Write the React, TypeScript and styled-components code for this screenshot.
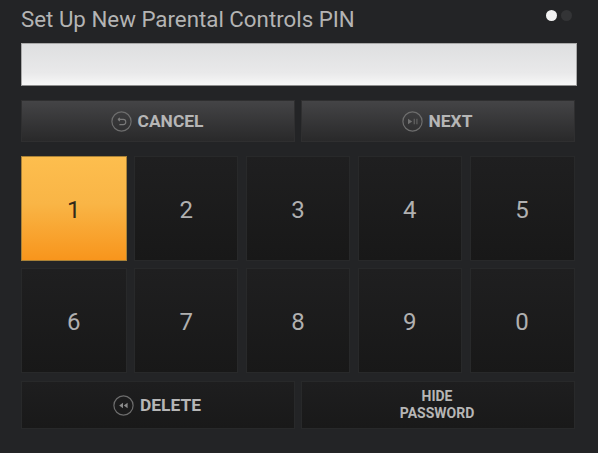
import React from 'react';
import styled, { createGlobalStyle } from 'styled-components';

const GlobalStyle = createGlobalStyle`
  html, body {
    margin: 0;
    padding: 0;
    background: #232426;
  }
`;

const KEYS = ['1', '2', '3', '4', '5', '6', '7', '8', '9', '0'];

const RingIcon: React.FC<{ children: React.ReactNode }> = ({ children }) => (
  <svg width="21" height="21" viewBox="0 0 21 21" fill="none">
    <circle cx="10.5" cy="10.5" r="9.6" stroke="#6d6d6d" strokeWidth="1.2" />
    {children}
  </svg>
);

const App: React.FC = () => (
  <Screen>
    <GlobalStyle />
    <Header>
      <Title>Set Up New Parental Controls PIN</Title>
      <Steps>
        <StepDot active />
        <StepDot />
      </Steps>
    </Header>
    <PinInput />
    <ActionRow>
      <ActionButton tone="raised">
        <RingIcon>
          <path
            d="M7 8.4h5.2a2.6 2.6 0 0 1 0 5.2H8.4M7 8.4l1.9-1.6M7 8.4l1.9 1.6"
            stroke="#7a7a7a"
            strokeWidth="1.1"
          />
        </RingIcon>
        CANCEL
      </ActionButton>
      <ActionButton tone="raised">
        <RingIcon>
          <path d="M6 7.7l4.2 2.8L6 13.3z" fill="#707070" />
          <path d="M11.6 7.8h1.4v5.4h-1.4zM14.2 7.8h1.4v5.4h-1.4z" fill="#5c5c5c" />
        </RingIcon>
        NEXT
      </ActionButton>
    </ActionRow>
    <KeyGrid>
      {KEYS.map((key, index) => (
        <Key key={key} selected={index === 0}>
          {key}
        </Key>
      ))}
    </KeyGrid>
    <ActionRow bottom>
      <ActionButton tone="flat">
        <RingIcon>
          <path d="M10 7.8v5.4l-3.8-2.7zM14.6 7.8v5.4l-3.8-2.7z" fill="#8a8a8a" />
        </RingIcon>
        DELETE
      </ActionButton>
      <ActionButton tone="flat" small>
        HIDE
        <br />
        PASSWORD
      </ActionButton>
    </ActionRow>
  </Screen>
);

const Screen = styled.div`
  box-sizing: border-box;
  width: 598px;
  height: 453px;
  padding: 0 23px 0 21px;
  overflow: hidden;
  background: #232426;
  font-family: Roboto, 'Liberation Sans', sans-serif;
`;

const Header = styled.div`
  display: flex;
  justify-content: space-between;
  align-items: center;
  height: 38px;
  padding: 0 3px 0 0;
`;

const Title = styled.h1`
  margin: 0;
  font-size: 22.3px;
  font-weight: 400;
  color: #b4b4b4;
  white-space: nowrap;
`;

const Steps = styled.div`
  display: flex;
  gap: 4px;
  margin-bottom: 8px;
`;

const StepDot = styled.span<{ active?: boolean }>`
  width: 11px;
  height: 11px;
  border-radius: 50%;
  background: ${(props) => (props.active ? '#f2f2f2' : '#333436')};
`;

const PinInput = styled.div`
  box-sizing: border-box;
  width: 556px;
  height: 43px;
  margin-top: 5px;
  border: 1px solid #a9a9a9;
  border-bottom-color: #8f8f8f;
  background: linear-gradient(#dedfe0 0%, #e9e9ea 70%, #f7f7f7 100%);
`;

const ActionRow = styled.div<{ bottom?: boolean }>`
  display: grid;
  grid-template-columns: 274px 274px;
  gap: 6px;
  height: ${(props) => (props.bottom ? '48px' : '42px')};
  margin-top: ${(props) => (props.bottom ? '8px' : '14px')};
`;

const ActionButton = styled.div<{ tone: 'raised' | 'flat'; small?: boolean }>`
  display: flex;
  justify-content: center;
  align-items: center;
  gap: 6px;
  box-sizing: border-box;
  padding-right: 2px;
  border: 1px solid ${(props) => (props.tone === 'raised' ? '#2f2f30' : '#28292a')};
  background: ${(props) =>
    props.tone === 'raised'
      ? 'linear-gradient(#444446, #29292a)'
      : 'linear-gradient(#1e1e1f, #191919)'};
  color: #b6b6b6;
  font-size: ${(props) => (props.small ? '14px' : '17.4px')};
  font-weight: 700;
  line-height: ${(props) => (props.small ? '17.5px' : 'normal')};
  text-align: center;
`;

const KeyGrid = styled.div`
  display: grid;
  grid-template-columns: 105.5px repeat(3, 104px) 105px;
  grid-auto-rows: 105px;
  column-gap: 7.75px;
  row-gap: 7px;
  margin-top: 14px;
`;

const Key = styled.div<{ selected?: boolean }>`
  display: flex;
  justify-content: center;
  align-items: center;
  box-sizing: border-box;
  padding-top: 3px;
  border: 1px solid ${(props) => (props.selected ? '#a98238' : '#28292a')};
  background: ${(props) =>
    props.selected
      ? 'linear-gradient(#fdbe4e, #f9b546 45%, #f8951c)'
      : 'linear-gradient(#1f1f20, #181818)'};
  color: ${(props) => (props.selected ? '#33291a' : '#b0b0b0')};
  font-size: 24px;
  font-weight: 400;
`;

export default App;
